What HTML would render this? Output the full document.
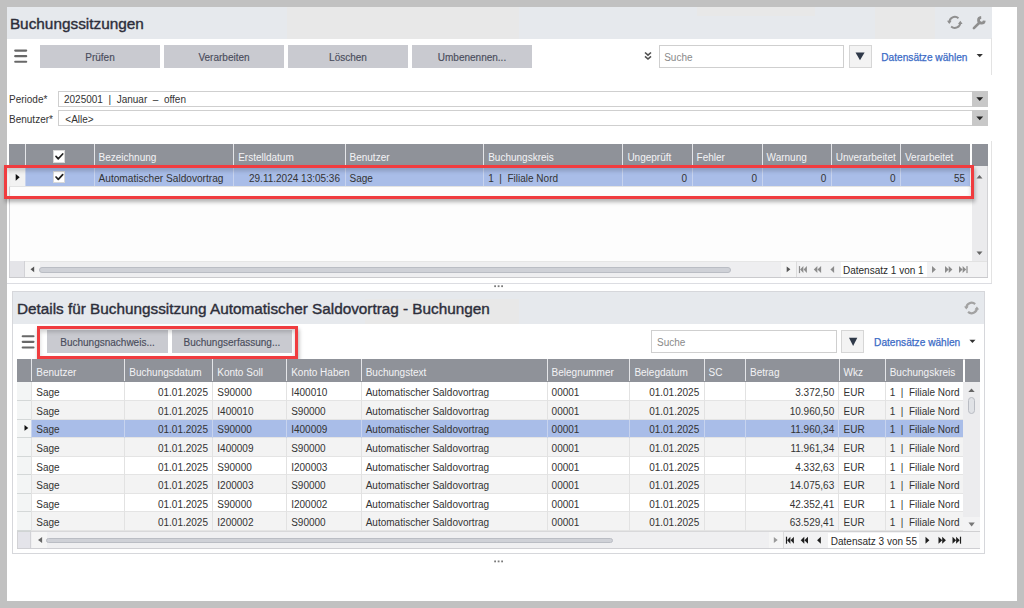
<!DOCTYPE html><html><head><meta charset="utf-8"><style>
*{box-sizing:border-box;margin:0;padding:0}
html,body{width:1024px;height:608px;overflow:hidden;background:#c1c1c1;font-family:"Liberation Sans",sans-serif;font-size:10px;color:#333}
.a{position:absolute}
.tbar{background:#e6e9ed}
.ttl{font-weight:bold;color:#2c2d3a;white-space:nowrap}
.btn{background:#c9cad0;color:#474858;text-align:center;white-space:nowrap}
.ham{width:13px;height:2px;background:#6e6e6e}
.inp{border:1px solid #cfcfcf;background:#fff}
.ph{color:#8a8a8a;white-space:nowrap}
.link{color:#3f6ec9;white-space:nowrap}
.hdr{background:#8f9299}
.t{position:absolute;white-space:nowrap}
.ht{color:#f3f3f5}
.vl{position:absolute;width:1px}
.red{border:3px solid #f03c3f;box-shadow:1px 3px 4px rgba(0,0,0,0.3), inset 0 3px 4px rgba(0,0,0,0.18)}
svg{position:absolute;overflow:visible}
</style></head><body>
<div class="a " style="left:7px;top:7px;width:1010px;height:594px;background:#fff"></div>
<div class="a tbar" style="left:7px;top:7px;width:985px;height:31.5px;"></div>
<div class="a " style="left:286.7px;top:7px;width:232.3px;height:31.5px;background:#e8e8e8"></div>
<div class="a " style="left:697px;top:7px;width:118px;height:9.4px;background:#e8e8e8"></div>
<div class="a " style="left:875.4px;top:7px;width:59.8px;height:31.5px;background:#e8e8e8"></div>
<div class="t" style="top:16.01px;font-size:15.35px;line-height:15.35px;left:9.90px;color:#2c2d3a;-webkit-text-stroke:0.4px #30313c;">Buchungssitzungen</div>
<div class="a " style="left:991px;top:38px;width:1px;height:37px;background:#e3e3e3"></div>
<div class="a " style="left:991px;top:141px;width:1px;height:142px;background:#e3e3e3"></div>
<div class="a btn" style="left:40px;top:45px;width:120px;height:22.5px;"></div>
<div class="t" style="left:40px;width:120px;text-align:center;top:52.53px;font-size:10px;line-height:10px;color:#4a4d5c;-webkit-text-stroke:0.15px #4a4d5c">Prüfen</div>
<div class="a btn" style="left:164px;top:45px;width:120px;height:22.5px;"></div>
<div class="t" style="left:164px;width:120px;text-align:center;top:52.53px;font-size:10px;line-height:10px;color:#4a4d5c;-webkit-text-stroke:0.15px #4a4d5c">Verarbeiten</div>
<div class="a btn" style="left:288px;top:45px;width:120px;height:22.5px;"></div>
<div class="t" style="left:288px;width:120px;text-align:center;top:52.53px;font-size:10px;line-height:10px;color:#4a4d5c;-webkit-text-stroke:0.15px #4a4d5c">Löschen</div>
<div class="a btn" style="left:412px;top:45px;width:120px;height:22.5px;"></div>
<div class="t" style="left:412px;width:120px;text-align:center;top:52.53px;font-size:10px;line-height:10px;color:#4a4d5c;-webkit-text-stroke:0.15px #4a4d5c">Umbenennen...</div>
<div class="a inp" style="left:659px;top:44.6px;width:185px;height:23px;"></div>
<div class="t" style="top:52.83px;font-size:10px;line-height:10px;left:664.20px;color:#8a8a8a;">Suche</div>
<div class="a " style="left:849px;top:44.5px;width:22.5px;height:23px;background:#f3f3f3;border:1px solid #d6d6d6"></div>
<div class="t" style="top:52.71px;font-size:10.15px;line-height:10.15px;left:881.30px;color:#3b6bc6;-webkit-text-stroke:0.25px #3b6bc6;">Datensätze wählen</div>
<div class="t" style="top:95.13px;font-size:10px;line-height:10px;left:9.00px;">Periode*</div>
<div class="a " style="left:58px;top:91px;width:930px;height:15.5px;border:1px solid #cfcfcf;border-right:none;background:#fff"></div>
<div class="t" style="top:95.13px;font-size:10px;line-height:10px;left:64.00px;">2025001&nbsp; | &nbsp;Januar&nbsp; – &nbsp;offen</div>
<div class="a " style="left:972px;top:91px;width:15.5px;height:15.5px;background:#c8c8c8"></div>
<div class="t" style="top:114.83px;font-size:10px;line-height:10px;left:9.00px;">Benutzer*</div>
<div class="a " style="left:58px;top:110px;width:930px;height:15.5px;border:1px solid #cfcfcf;border-right:none;background:#fff"></div>
<div class="t" style="top:114.83px;font-size:10px;line-height:10px;left:65.30px;">&lt;Alle&gt;</div>
<div class="a " style="left:972px;top:110px;width:15.5px;height:15.5px;background:#c8c8c8"></div>
<div class="a " style="left:9px;top:144px;width:978.5px;height:133.7px;border:1px solid #d3d3d6;background:#fdfdfd"></div>
<div class="a hdr" style="left:9px;top:144px;width:963px;height:21.5px;"></div>
<div class="a hdr" style="left:972px;top:144px;width:15.5px;height:21.5px;"></div>
<div class="a " style="left:24.5px;top:144px;width:1px;height:21.5px;background:#e4e5e8"></div>
<div class="a " style="left:93.5px;top:144px;width:1px;height:21.5px;background:#e4e5e8"></div>
<div class="a " style="left:233.2px;top:144px;width:1px;height:21.5px;background:#e4e5e8"></div>
<div class="a " style="left:344.5px;top:144px;width:1px;height:21.5px;background:#e4e5e8"></div>
<div class="a " style="left:483.2px;top:144px;width:1px;height:21.5px;background:#e4e5e8"></div>
<div class="a " style="left:622.4px;top:144px;width:1px;height:21.5px;background:#e4e5e8"></div>
<div class="a " style="left:691.6px;top:144px;width:1px;height:21.5px;background:#e4e5e8"></div>
<div class="a " style="left:761.6px;top:144px;width:1px;height:21.5px;background:#e4e5e8"></div>
<div class="a " style="left:830.7px;top:144px;width:1px;height:21.5px;background:#e4e5e8"></div>
<div class="a " style="left:900px;top:144px;width:1px;height:21.5px;background:#e4e5e8"></div>
<div class="t" style="top:152.73px;font-size:10px;line-height:10px;left:98.50px;color:#f3f3f5;">Bezeichnung</div>
<div class="t" style="top:152.73px;font-size:10px;line-height:10px;left:238.20px;color:#f3f3f5;">Erstelldatum</div>
<div class="t" style="top:152.73px;font-size:10px;line-height:10px;left:349.50px;color:#f3f3f5;">Benutzer</div>
<div class="t" style="top:152.73px;font-size:10px;line-height:10px;left:488.20px;color:#f3f3f5;">Buchungskreis</div>
<div class="t" style="top:152.73px;font-size:10px;line-height:10px;left:627.40px;color:#f3f3f5;">Ungeprüft</div>
<div class="t" style="top:152.73px;font-size:10px;line-height:10px;left:696.60px;color:#f3f3f5;">Fehler</div>
<div class="t" style="top:152.73px;font-size:10px;line-height:10px;left:766.60px;color:#f3f3f5;">Warnung</div>
<div class="t" style="top:152.73px;font-size:10px;line-height:10px;left:835.70px;color:#f3f3f5;">Unverarbeitet</div>
<div class="t" style="top:152.73px;font-size:10px;line-height:10px;left:905.00px;color:#f3f3f5;">Verarbeitet</div>
<div class="a " style="left:969.5px;top:144px;width:2.5px;height:21.5px;background:#fdfdfd"></div>
<div class="a " style="left:53.1px;top:150.4px;width:12.4px;height:12.2px;background:#fff;border:1px solid #d8d8d8"></div>
<div class="a " style="left:24.5px;top:166px;width:945px;height:20px;background:#a9bde8"></div>
<div class="a " style="left:9px;top:166px;width:15.5px;height:20px;background:#f2f2f2"></div>
<div class="a " style="left:24.5px;top:166px;width:1px;height:20px;background:#c7d3ee"></div>
<div class="a " style="left:93.5px;top:166px;width:1px;height:20px;background:#c7d3ee"></div>
<div class="a " style="left:233.2px;top:166px;width:1px;height:20px;background:#c7d3ee"></div>
<div class="a " style="left:344.5px;top:166px;width:1px;height:20px;background:#c7d3ee"></div>
<div class="a " style="left:483.2px;top:166px;width:1px;height:20px;background:#c7d3ee"></div>
<div class="a " style="left:622.4px;top:166px;width:1px;height:20px;background:#c7d3ee"></div>
<div class="a " style="left:691.6px;top:166px;width:1px;height:20px;background:#c7d3ee"></div>
<div class="a " style="left:761.6px;top:166px;width:1px;height:20px;background:#c7d3ee"></div>
<div class="a " style="left:830.7px;top:166px;width:1px;height:20px;background:#c7d3ee"></div>
<div class="a " style="left:900px;top:166px;width:1px;height:20px;background:#c7d3ee"></div>
<div class="a " style="left:9px;top:186px;width:963px;height:1px;background:#e3e3e3"></div>
<svg style="left:0;top:0" width="1024" height="608"><polygon points="15.7,174 19.7,177.35 15.7,180.7" fill="#111"/></svg>
<div class="a " style="left:53.1px;top:171px;width:12.4px;height:12.2px;background:#fff;border:1px solid #d8d8d8"></div>
<div class="t" style="top:173.81px;font-size:10.15px;line-height:10.15px;left:98.50px;">Automatischer Saldovortrag</div>
<div class="t" style="top:173.94px;font-size:10px;line-height:10px;right:684.00px;text-align:right;">29.11.2024 13:05:36</div>
<div class="t" style="top:173.94px;font-size:10px;line-height:10px;left:349.50px;">Sage</div>
<div class="t" style="top:173.94px;font-size:10px;line-height:10px;left:488.20px;">1&nbsp; | &nbsp;Filiale Nord</div>
<div class="t" style="top:173.94px;font-size:10px;line-height:10px;right:336.90px;text-align:right;">0</div>
<div class="t" style="top:173.94px;font-size:10px;line-height:10px;right:266.90px;text-align:right;">0</div>
<div class="t" style="top:173.94px;font-size:10px;line-height:10px;right:197.80px;text-align:right;">0</div>
<div class="t" style="top:173.94px;font-size:10px;line-height:10px;right:128.50px;text-align:right;">0</div>
<div class="t" style="top:173.94px;font-size:10px;line-height:10px;right:59.00px;text-align:right;">55</div>
<div class="a " style="left:972px;top:165.5px;width:15px;height:95.5px;background:#ebebed"></div>
<div class="a " style="left:9.5px;top:261px;width:962px;height:16.5px;background:#eeeef0;border-top:1px solid #e6e6e6"></div>
<div class="a " style="left:9.5px;top:261px;width:15px;height:16.5px;background:#e4e4e8;border-right:1px solid #d2d2d6"></div>
<div class="a " style="left:24.5px;top:261.5px;width:15px;height:16px;background:#f5f5f5"></div>
<div class="a " style="left:39px;top:267px;width:692px;height:5.6px;background:#cfd1d7;border:1px solid #babdc4;border-radius:3px"></div>
<div class="a " style="left:781px;top:261.5px;width:14.5px;height:16px;background:#f5f5f5"></div>
<div class="a " style="left:795.5px;top:261px;width:191.5px;height:16.5px;background:#f2f2f3;border-left:1px solid #dcdcdc;border-top:1px solid #e2e2e2"></div>
<div class="a " style="left:840.7px;top:262px;width:86.1px;height:15.3px;background:#fff"></div>
<div class="t" style="top:266.24px;font-size:10px;line-height:10px;left:843.00px;color:#2a2a2a;">Datensatz 1 von 1</div>
<div class="a red" style="left:4px;top:165px;width:970px;height:34px;"></div>
<div class="a " style="left:7px;top:283px;width:985px;height:1px;background:#dcdde2"></div>
<div class="a " style="left:9px;top:277px;width:979px;height:1px;background:#cacacd"></div>
<div class="a " style="left:12px;top:291px;width:972.5px;height:262.5px;border:1px solid #d6d7db;background:#fff"></div>
<div class="a tbar" style="left:13px;top:292px;width:970.5px;height:32px;"></div>
<div class="a " style="left:365px;top:299.3px;width:153.7px;height:24.5px;background:#e8e8e8"></div>
<div class="t" style="top:301.45px;font-size:15.3px;line-height:15.3px;left:17.00px;color:#2c2d3a;-webkit-text-stroke:0.4px #30313c;">Details für Buchungssitzung Automatischer Saldovortrag - Buchungen</div>
<div class="a btn" style="left:47px;top:330px;width:121px;height:22.7px;"></div>
<div class="t" style="left:47px;width:121px;text-align:center;top:338.14px;font-size:10px;line-height:10px;color:#4a4d5c;-webkit-text-stroke:0.15px #4a4d5c">Buchungsnachweis...</div>
<div class="a btn" style="left:171.6px;top:330px;width:120.6px;height:22.7px;"></div>
<div class="t" style="left:171.6px;width:120.6px;text-align:center;top:338.14px;font-size:10px;line-height:10px;color:#4a4d5c;-webkit-text-stroke:0.15px #4a4d5c">Buchungserfassung...</div>
<div class="a red" style="left:37px;top:326.2px;width:261.2px;height:32.5px;"></div>
<div class="a inp" style="left:651.3px;top:330px;width:185.4px;height:22.5px;"></div>
<div class="t" style="top:338.04px;font-size:10px;line-height:10px;left:657.00px;color:#8a8a8a;">Suche</div>
<div class="a " style="left:841px;top:330px;width:23.3px;height:22.5px;background:#f3f3f3;border:1px solid #d6d6d6"></div>
<div class="t" style="top:337.81px;font-size:10.15px;line-height:10.15px;left:874.10px;color:#3b6bc6;-webkit-text-stroke:0.25px #3b6bc6;">Datensätze wählen</div>
<div class="a " style="left:17.4px;top:359.2px;width:962.9px;height:189.2px;border:1px solid #d3d3d6;background:#fff"></div>
<div class="a hdr" style="left:17.4px;top:359.2px;width:946px;height:22.69999999999999px;"></div>
<div class="a hdr" style="left:965px;top:359.2px;width:14.6px;height:22.69999999999999px;"></div>
<div class="a " style="left:31.3px;top:359.2px;width:1px;height:22.30000000000001px;background:#e4e5e8"></div>
<div class="a " style="left:124.3px;top:359.2px;width:1px;height:22.30000000000001px;background:#e4e5e8"></div>
<div class="a " style="left:212.3px;top:359.2px;width:1px;height:22.30000000000001px;background:#e4e5e8"></div>
<div class="a " style="left:286.2px;top:359.2px;width:1px;height:22.30000000000001px;background:#e4e5e8"></div>
<div class="a " style="left:360.7px;top:359.2px;width:1px;height:22.30000000000001px;background:#e4e5e8"></div>
<div class="a " style="left:546.6px;top:359.2px;width:1px;height:22.30000000000001px;background:#e4e5e8"></div>
<div class="a " style="left:629.4px;top:359.2px;width:1px;height:22.30000000000001px;background:#e4e5e8"></div>
<div class="a " style="left:703.5px;top:359.2px;width:1px;height:22.30000000000001px;background:#e4e5e8"></div>
<div class="a " style="left:745px;top:359.2px;width:1px;height:22.30000000000001px;background:#e4e5e8"></div>
<div class="a " style="left:838.5px;top:359.2px;width:1px;height:22.30000000000001px;background:#e4e5e8"></div>
<div class="a " style="left:884.7px;top:359.2px;width:1px;height:22.30000000000001px;background:#e4e5e8"></div>
<div class="t" style="top:367.84px;font-size:10px;line-height:10px;left:36.30px;color:#f3f3f5;">Benutzer</div>
<div class="t" style="top:367.84px;font-size:10px;line-height:10px;left:129.30px;color:#f3f3f5;">Buchungsdatum</div>
<div class="t" style="top:367.84px;font-size:10px;line-height:10px;left:217.30px;color:#f3f3f5;">Konto Soll</div>
<div class="t" style="top:367.84px;font-size:10px;line-height:10px;left:291.20px;color:#f3f3f5;">Konto Haben</div>
<div class="t" style="top:367.84px;font-size:10px;line-height:10px;left:365.70px;color:#f3f3f5;">Buchungstext</div>
<div class="t" style="top:367.84px;font-size:10px;line-height:10px;left:551.60px;color:#f3f3f5;">Belegnummer</div>
<div class="t" style="top:367.84px;font-size:10px;line-height:10px;left:634.40px;color:#f3f3f5;">Belegdatum</div>
<div class="t" style="top:367.84px;font-size:10px;line-height:10px;left:708.50px;color:#f3f3f5;">SC</div>
<div class="t" style="top:367.84px;font-size:10px;line-height:10px;left:750.00px;color:#f3f3f5;">Betrag</div>
<div class="t" style="top:367.84px;font-size:10px;line-height:10px;left:843.50px;color:#f3f3f5;">Wkz</div>
<div class="t" style="top:367.84px;font-size:10px;line-height:10px;left:889.70px;color:#f3f3f5;">Buchungskreis</div>
<div class="a " style="left:31px;top:382px;width:932.2px;height:18px;background:#ffffff"></div>
<div class="a " style="left:17.4px;top:382px;width:14px;height:18px;background:#f3f5f5"></div>
<div class="a " style="left:17.4px;top:400px;width:945.8000000000001px;height:1px;background:#e4e4e4"></div>
<div class="a " style="left:17.4px;top:400px;width:14px;height:1px;background:#d4d8d8"></div>
<div class="a " style="left:31px;top:382px;width:1px;height:19px;background:#e2e2e2"></div>
<div class="a " style="left:124px;top:382px;width:1px;height:19px;background:#e2e2e2"></div>
<div class="a " style="left:212px;top:382px;width:1px;height:19px;background:#e2e2e2"></div>
<div class="a " style="left:286px;top:382px;width:1px;height:19px;background:#e2e2e2"></div>
<div class="a " style="left:361px;top:382px;width:1px;height:19px;background:#e2e2e2"></div>
<div class="a " style="left:547px;top:382px;width:1px;height:19px;background:#e2e2e2"></div>
<div class="a " style="left:629px;top:382px;width:1px;height:19px;background:#e2e2e2"></div>
<div class="a " style="left:704px;top:382px;width:1px;height:19px;background:#e2e2e2"></div>
<div class="a " style="left:745px;top:382px;width:1px;height:19px;background:#e2e2e2"></div>
<div class="a " style="left:838px;top:382px;width:1px;height:19px;background:#e2e2e2"></div>
<div class="a " style="left:885px;top:382px;width:1px;height:19px;background:#e2e2e2"></div>
<div class="t" style="top:388.34px;font-size:10px;line-height:10px;left:36.30px;">Sage</div>
<div class="t" style="top:388.34px;font-size:10px;line-height:10px;right:816.00px;text-align:right;">01.01.2025</div>
<div class="t" style="top:388.34px;font-size:10px;line-height:10px;left:217.30px;">S90000</div>
<div class="t" style="top:388.34px;font-size:10px;line-height:10px;left:291.20px;">I400010</div>
<div class="t" style="top:388.34px;font-size:10px;line-height:10px;left:365.70px;">Automatischer Saldovortrag</div>
<div class="t" style="top:388.34px;font-size:10px;line-height:10px;left:551.60px;">00001</div>
<div class="t" style="top:388.34px;font-size:10px;line-height:10px;right:324.80px;text-align:right;">01.01.2025</div>
<div class="t" style="top:388.34px;font-size:10px;line-height:10px;right:189.80px;text-align:right;">3.372,50</div>
<div class="t" style="top:388.34px;font-size:10px;line-height:10px;left:843.50px;">EUR</div>
<div class="t" style="top:388.34px;font-size:10px;line-height:10px;left:889.70px;">1&nbsp; | &nbsp;Filiale Nord</div>
<div class="a " style="left:31px;top:401px;width:932.2px;height:18px;background:#f3f3f3"></div>
<div class="a " style="left:17.4px;top:401px;width:14px;height:18px;background:#f3f5f5"></div>
<div class="a " style="left:17.4px;top:419px;width:945.8000000000001px;height:1px;background:#e4e4e4"></div>
<div class="a " style="left:17.4px;top:419px;width:14px;height:1px;background:#d4d8d8"></div>
<div class="a " style="left:31px;top:401px;width:1px;height:19px;background:#e2e2e2"></div>
<div class="a " style="left:124px;top:401px;width:1px;height:19px;background:#e2e2e2"></div>
<div class="a " style="left:212px;top:401px;width:1px;height:19px;background:#e2e2e2"></div>
<div class="a " style="left:286px;top:401px;width:1px;height:19px;background:#e2e2e2"></div>
<div class="a " style="left:361px;top:401px;width:1px;height:19px;background:#e2e2e2"></div>
<div class="a " style="left:547px;top:401px;width:1px;height:19px;background:#e2e2e2"></div>
<div class="a " style="left:629px;top:401px;width:1px;height:19px;background:#e2e2e2"></div>
<div class="a " style="left:704px;top:401px;width:1px;height:19px;background:#e2e2e2"></div>
<div class="a " style="left:745px;top:401px;width:1px;height:19px;background:#e2e2e2"></div>
<div class="a " style="left:838px;top:401px;width:1px;height:19px;background:#e2e2e2"></div>
<div class="a " style="left:885px;top:401px;width:1px;height:19px;background:#e2e2e2"></div>
<div class="t" style="top:406.89px;font-size:10px;line-height:10px;left:36.30px;">Sage</div>
<div class="t" style="top:406.89px;font-size:10px;line-height:10px;right:816.00px;text-align:right;">01.01.2025</div>
<div class="t" style="top:406.89px;font-size:10px;line-height:10px;left:217.30px;">I400010</div>
<div class="t" style="top:406.89px;font-size:10px;line-height:10px;left:291.20px;">S90000</div>
<div class="t" style="top:406.89px;font-size:10px;line-height:10px;left:365.70px;">Automatischer Saldovortrag</div>
<div class="t" style="top:406.89px;font-size:10px;line-height:10px;left:551.60px;">00001</div>
<div class="t" style="top:406.89px;font-size:10px;line-height:10px;right:324.80px;text-align:right;">01.01.2025</div>
<div class="t" style="top:406.89px;font-size:10px;line-height:10px;right:189.80px;text-align:right;">10.960,50</div>
<div class="t" style="top:406.89px;font-size:10px;line-height:10px;left:843.50px;">EUR</div>
<div class="t" style="top:406.89px;font-size:10px;line-height:10px;left:889.70px;">1&nbsp; | &nbsp;Filiale Nord</div>
<div class="a " style="left:31px;top:420px;width:932.2px;height:17px;background:#a9bde8"></div>
<div class="a " style="left:17.4px;top:420px;width:14px;height:17px;background:#f3f5f5"></div>
<div class="a " style="left:17.4px;top:437px;width:945.8000000000001px;height:1px;background:#e4e4e4"></div>
<div class="a " style="left:17.4px;top:437px;width:14px;height:1px;background:#d4d8d8"></div>
<div class="a " style="left:31px;top:420px;width:1px;height:18px;background:#c7d3ee"></div>
<div class="a " style="left:124px;top:420px;width:1px;height:18px;background:#c7d3ee"></div>
<div class="a " style="left:212px;top:420px;width:1px;height:18px;background:#c7d3ee"></div>
<div class="a " style="left:286px;top:420px;width:1px;height:18px;background:#c7d3ee"></div>
<div class="a " style="left:361px;top:420px;width:1px;height:18px;background:#c7d3ee"></div>
<div class="a " style="left:547px;top:420px;width:1px;height:18px;background:#c7d3ee"></div>
<div class="a " style="left:629px;top:420px;width:1px;height:18px;background:#c7d3ee"></div>
<div class="a " style="left:704px;top:420px;width:1px;height:18px;background:#c7d3ee"></div>
<div class="a " style="left:745px;top:420px;width:1px;height:18px;background:#c7d3ee"></div>
<div class="a " style="left:838px;top:420px;width:1px;height:18px;background:#c7d3ee"></div>
<div class="a " style="left:885px;top:420px;width:1px;height:18px;background:#c7d3ee"></div>
<div class="t" style="top:425.44px;font-size:10px;line-height:10px;left:36.30px;">Sage</div>
<div class="t" style="top:425.44px;font-size:10px;line-height:10px;right:816.00px;text-align:right;">01.01.2025</div>
<div class="t" style="top:425.44px;font-size:10px;line-height:10px;left:217.30px;">S90000</div>
<div class="t" style="top:425.44px;font-size:10px;line-height:10px;left:291.20px;">I400009</div>
<div class="t" style="top:425.44px;font-size:10px;line-height:10px;left:365.70px;">Automatischer Saldovortrag</div>
<div class="t" style="top:425.44px;font-size:10px;line-height:10px;left:551.60px;">00001</div>
<div class="t" style="top:425.44px;font-size:10px;line-height:10px;right:324.80px;text-align:right;">01.01.2025</div>
<div class="t" style="top:425.44px;font-size:10px;line-height:10px;right:189.80px;text-align:right;">11.960,34</div>
<div class="t" style="top:425.44px;font-size:10px;line-height:10px;left:843.50px;">EUR</div>
<div class="t" style="top:425.44px;font-size:10px;line-height:10px;left:889.70px;">1&nbsp; | &nbsp;Filiale Nord</div>
<div class="a " style="left:31px;top:438px;width:932.2px;height:18px;background:#f3f3f3"></div>
<div class="a " style="left:17.4px;top:438px;width:14px;height:18px;background:#f3f5f5"></div>
<div class="a " style="left:17.4px;top:456px;width:945.8000000000001px;height:1px;background:#e4e4e4"></div>
<div class="a " style="left:17.4px;top:456px;width:14px;height:1px;background:#d4d8d8"></div>
<div class="a " style="left:31px;top:438px;width:1px;height:19px;background:#e2e2e2"></div>
<div class="a " style="left:124px;top:438px;width:1px;height:19px;background:#e2e2e2"></div>
<div class="a " style="left:212px;top:438px;width:1px;height:19px;background:#e2e2e2"></div>
<div class="a " style="left:286px;top:438px;width:1px;height:19px;background:#e2e2e2"></div>
<div class="a " style="left:361px;top:438px;width:1px;height:19px;background:#e2e2e2"></div>
<div class="a " style="left:547px;top:438px;width:1px;height:19px;background:#e2e2e2"></div>
<div class="a " style="left:629px;top:438px;width:1px;height:19px;background:#e2e2e2"></div>
<div class="a " style="left:704px;top:438px;width:1px;height:19px;background:#e2e2e2"></div>
<div class="a " style="left:745px;top:438px;width:1px;height:19px;background:#e2e2e2"></div>
<div class="a " style="left:838px;top:438px;width:1px;height:19px;background:#e2e2e2"></div>
<div class="a " style="left:885px;top:438px;width:1px;height:19px;background:#e2e2e2"></div>
<div class="t" style="top:443.99px;font-size:10px;line-height:10px;left:36.30px;">Sage</div>
<div class="t" style="top:443.99px;font-size:10px;line-height:10px;right:816.00px;text-align:right;">01.01.2025</div>
<div class="t" style="top:443.99px;font-size:10px;line-height:10px;left:217.30px;">I400009</div>
<div class="t" style="top:443.99px;font-size:10px;line-height:10px;left:291.20px;">S90000</div>
<div class="t" style="top:443.99px;font-size:10px;line-height:10px;left:365.70px;">Automatischer Saldovortrag</div>
<div class="t" style="top:443.99px;font-size:10px;line-height:10px;left:551.60px;">00001</div>
<div class="t" style="top:443.99px;font-size:10px;line-height:10px;right:324.80px;text-align:right;">01.01.2025</div>
<div class="t" style="top:443.99px;font-size:10px;line-height:10px;right:189.80px;text-align:right;">11.961,34</div>
<div class="t" style="top:443.99px;font-size:10px;line-height:10px;left:843.50px;">EUR</div>
<div class="t" style="top:443.99px;font-size:10px;line-height:10px;left:889.70px;">1&nbsp; | &nbsp;Filiale Nord</div>
<div class="a " style="left:31px;top:457px;width:932.2px;height:17px;background:#ffffff"></div>
<div class="a " style="left:17.4px;top:457px;width:14px;height:17px;background:#f3f5f5"></div>
<div class="a " style="left:17.4px;top:474px;width:945.8000000000001px;height:1px;background:#e4e4e4"></div>
<div class="a " style="left:17.4px;top:474px;width:14px;height:1px;background:#d4d8d8"></div>
<div class="a " style="left:31px;top:457px;width:1px;height:18px;background:#e2e2e2"></div>
<div class="a " style="left:124px;top:457px;width:1px;height:18px;background:#e2e2e2"></div>
<div class="a " style="left:212px;top:457px;width:1px;height:18px;background:#e2e2e2"></div>
<div class="a " style="left:286px;top:457px;width:1px;height:18px;background:#e2e2e2"></div>
<div class="a " style="left:361px;top:457px;width:1px;height:18px;background:#e2e2e2"></div>
<div class="a " style="left:547px;top:457px;width:1px;height:18px;background:#e2e2e2"></div>
<div class="a " style="left:629px;top:457px;width:1px;height:18px;background:#e2e2e2"></div>
<div class="a " style="left:704px;top:457px;width:1px;height:18px;background:#e2e2e2"></div>
<div class="a " style="left:745px;top:457px;width:1px;height:18px;background:#e2e2e2"></div>
<div class="a " style="left:838px;top:457px;width:1px;height:18px;background:#e2e2e2"></div>
<div class="a " style="left:885px;top:457px;width:1px;height:18px;background:#e2e2e2"></div>
<div class="t" style="top:462.54px;font-size:10px;line-height:10px;left:36.30px;">Sage</div>
<div class="t" style="top:462.54px;font-size:10px;line-height:10px;right:816.00px;text-align:right;">01.01.2025</div>
<div class="t" style="top:462.54px;font-size:10px;line-height:10px;left:217.30px;">S90000</div>
<div class="t" style="top:462.54px;font-size:10px;line-height:10px;left:291.20px;">I200003</div>
<div class="t" style="top:462.54px;font-size:10px;line-height:10px;left:365.70px;">Automatischer Saldovortrag</div>
<div class="t" style="top:462.54px;font-size:10px;line-height:10px;left:551.60px;">00001</div>
<div class="t" style="top:462.54px;font-size:10px;line-height:10px;right:324.80px;text-align:right;">01.01.2025</div>
<div class="t" style="top:462.54px;font-size:10px;line-height:10px;right:189.80px;text-align:right;">4.332,63</div>
<div class="t" style="top:462.54px;font-size:10px;line-height:10px;left:843.50px;">EUR</div>
<div class="t" style="top:462.54px;font-size:10px;line-height:10px;left:889.70px;">1&nbsp; | &nbsp;Filiale Nord</div>
<div class="a " style="left:31px;top:475px;width:932.2px;height:18px;background:#f3f3f3"></div>
<div class="a " style="left:17.4px;top:475px;width:14px;height:18px;background:#f3f5f5"></div>
<div class="a " style="left:17.4px;top:493px;width:945.8000000000001px;height:1px;background:#e4e4e4"></div>
<div class="a " style="left:17.4px;top:493px;width:14px;height:1px;background:#d4d8d8"></div>
<div class="a " style="left:31px;top:475px;width:1px;height:19px;background:#e2e2e2"></div>
<div class="a " style="left:124px;top:475px;width:1px;height:19px;background:#e2e2e2"></div>
<div class="a " style="left:212px;top:475px;width:1px;height:19px;background:#e2e2e2"></div>
<div class="a " style="left:286px;top:475px;width:1px;height:19px;background:#e2e2e2"></div>
<div class="a " style="left:361px;top:475px;width:1px;height:19px;background:#e2e2e2"></div>
<div class="a " style="left:547px;top:475px;width:1px;height:19px;background:#e2e2e2"></div>
<div class="a " style="left:629px;top:475px;width:1px;height:19px;background:#e2e2e2"></div>
<div class="a " style="left:704px;top:475px;width:1px;height:19px;background:#e2e2e2"></div>
<div class="a " style="left:745px;top:475px;width:1px;height:19px;background:#e2e2e2"></div>
<div class="a " style="left:838px;top:475px;width:1px;height:19px;background:#e2e2e2"></div>
<div class="a " style="left:885px;top:475px;width:1px;height:19px;background:#e2e2e2"></div>
<div class="t" style="top:481.09px;font-size:10px;line-height:10px;left:36.30px;">Sage</div>
<div class="t" style="top:481.09px;font-size:10px;line-height:10px;right:816.00px;text-align:right;">01.01.2025</div>
<div class="t" style="top:481.09px;font-size:10px;line-height:10px;left:217.30px;">I200003</div>
<div class="t" style="top:481.09px;font-size:10px;line-height:10px;left:291.20px;">S90000</div>
<div class="t" style="top:481.09px;font-size:10px;line-height:10px;left:365.70px;">Automatischer Saldovortrag</div>
<div class="t" style="top:481.09px;font-size:10px;line-height:10px;left:551.60px;">00001</div>
<div class="t" style="top:481.09px;font-size:10px;line-height:10px;right:324.80px;text-align:right;">01.01.2025</div>
<div class="t" style="top:481.09px;font-size:10px;line-height:10px;right:189.80px;text-align:right;">14.075,63</div>
<div class="t" style="top:481.09px;font-size:10px;line-height:10px;left:843.50px;">EUR</div>
<div class="t" style="top:481.09px;font-size:10px;line-height:10px;left:889.70px;">1&nbsp; | &nbsp;Filiale Nord</div>
<div class="a " style="left:31px;top:494px;width:932.2px;height:17px;background:#ffffff"></div>
<div class="a " style="left:17.4px;top:494px;width:14px;height:17px;background:#f3f5f5"></div>
<div class="a " style="left:17.4px;top:511px;width:945.8000000000001px;height:1px;background:#e4e4e4"></div>
<div class="a " style="left:17.4px;top:511px;width:14px;height:1px;background:#d4d8d8"></div>
<div class="a " style="left:31px;top:494px;width:1px;height:18px;background:#e2e2e2"></div>
<div class="a " style="left:124px;top:494px;width:1px;height:18px;background:#e2e2e2"></div>
<div class="a " style="left:212px;top:494px;width:1px;height:18px;background:#e2e2e2"></div>
<div class="a " style="left:286px;top:494px;width:1px;height:18px;background:#e2e2e2"></div>
<div class="a " style="left:361px;top:494px;width:1px;height:18px;background:#e2e2e2"></div>
<div class="a " style="left:547px;top:494px;width:1px;height:18px;background:#e2e2e2"></div>
<div class="a " style="left:629px;top:494px;width:1px;height:18px;background:#e2e2e2"></div>
<div class="a " style="left:704px;top:494px;width:1px;height:18px;background:#e2e2e2"></div>
<div class="a " style="left:745px;top:494px;width:1px;height:18px;background:#e2e2e2"></div>
<div class="a " style="left:838px;top:494px;width:1px;height:18px;background:#e2e2e2"></div>
<div class="a " style="left:885px;top:494px;width:1px;height:18px;background:#e2e2e2"></div>
<div class="t" style="top:499.64px;font-size:10px;line-height:10px;left:36.30px;">Sage</div>
<div class="t" style="top:499.64px;font-size:10px;line-height:10px;right:816.00px;text-align:right;">01.01.2025</div>
<div class="t" style="top:499.64px;font-size:10px;line-height:10px;left:217.30px;">S90000</div>
<div class="t" style="top:499.64px;font-size:10px;line-height:10px;left:291.20px;">I200002</div>
<div class="t" style="top:499.64px;font-size:10px;line-height:10px;left:365.70px;">Automatischer Saldovortrag</div>
<div class="t" style="top:499.64px;font-size:10px;line-height:10px;left:551.60px;">00001</div>
<div class="t" style="top:499.64px;font-size:10px;line-height:10px;right:324.80px;text-align:right;">01.01.2025</div>
<div class="t" style="top:499.64px;font-size:10px;line-height:10px;right:189.80px;text-align:right;">42.352,41</div>
<div class="t" style="top:499.64px;font-size:10px;line-height:10px;left:843.50px;">EUR</div>
<div class="t" style="top:499.64px;font-size:10px;line-height:10px;left:889.70px;">1&nbsp; | &nbsp;Filiale Nord</div>
<div class="a " style="left:31px;top:512px;width:932.2px;height:18px;background:#f3f3f3"></div>
<div class="a " style="left:17.4px;top:512px;width:14px;height:18px;background:#f3f5f5"></div>
<div class="a " style="left:17.4px;top:530px;width:945.8000000000001px;height:1px;background:#e4e4e4"></div>
<div class="a " style="left:17.4px;top:530px;width:14px;height:1px;background:#d4d8d8"></div>
<div class="a " style="left:31px;top:512px;width:1px;height:19px;background:#e2e2e2"></div>
<div class="a " style="left:124px;top:512px;width:1px;height:19px;background:#e2e2e2"></div>
<div class="a " style="left:212px;top:512px;width:1px;height:19px;background:#e2e2e2"></div>
<div class="a " style="left:286px;top:512px;width:1px;height:19px;background:#e2e2e2"></div>
<div class="a " style="left:361px;top:512px;width:1px;height:19px;background:#e2e2e2"></div>
<div class="a " style="left:547px;top:512px;width:1px;height:19px;background:#e2e2e2"></div>
<div class="a " style="left:629px;top:512px;width:1px;height:19px;background:#e2e2e2"></div>
<div class="a " style="left:704px;top:512px;width:1px;height:19px;background:#e2e2e2"></div>
<div class="a " style="left:745px;top:512px;width:1px;height:19px;background:#e2e2e2"></div>
<div class="a " style="left:838px;top:512px;width:1px;height:19px;background:#e2e2e2"></div>
<div class="a " style="left:885px;top:512px;width:1px;height:19px;background:#e2e2e2"></div>
<div class="t" style="top:518.18px;font-size:10px;line-height:10px;left:36.30px;">Sage</div>
<div class="t" style="top:518.18px;font-size:10px;line-height:10px;right:816.00px;text-align:right;">01.01.2025</div>
<div class="t" style="top:518.18px;font-size:10px;line-height:10px;left:217.30px;">I200002</div>
<div class="t" style="top:518.18px;font-size:10px;line-height:10px;left:291.20px;">S90000</div>
<div class="t" style="top:518.18px;font-size:10px;line-height:10px;left:365.70px;">Automatischer Saldovortrag</div>
<div class="t" style="top:518.18px;font-size:10px;line-height:10px;left:551.60px;">00001</div>
<div class="t" style="top:518.18px;font-size:10px;line-height:10px;right:324.80px;text-align:right;">01.01.2025</div>
<div class="t" style="top:518.18px;font-size:10px;line-height:10px;right:189.80px;text-align:right;">63.529,41</div>
<div class="t" style="top:518.18px;font-size:10px;line-height:10px;left:843.50px;">EUR</div>
<div class="t" style="top:518.18px;font-size:10px;line-height:10px;left:889.70px;">1&nbsp; | &nbsp;Filiale Nord</div>
<svg style="left:0;top:0" width="1024" height="608"><polygon points="24.5,425.1 28.3,427.90000000000003 24.5,430.70000000000005" fill="#111"/></svg>
<div class="a " style="left:963.2px;top:381.5px;width:16.6px;height:149.79999999999995px;background:#ececee"></div>
<div class="a " style="left:968px;top:396.6px;width:7.2px;height:17.4px;background:#e0e2e6;border:1px solid #b9bcc3;border-radius:4px"></div>
<div class="a " style="left:963.2px;top:517px;width:16.5px;height:14.3px;background:#f3f3f4"></div>
<div class="a " style="left:17.9px;top:531.3px;width:962px;height:17px;background:#efeff1;border-top:1px solid #d8d8da"></div>
<div class="a " style="left:17.9px;top:531.3px;width:13.6px;height:17px;background:#e4e4ea;border-right:1px solid #d2d2d6;border-top:1px solid #d0d4d4"></div>
<div class="a " style="left:31.5px;top:532.3px;width:15px;height:16px;background:#f5f5f5"></div>
<div class="a " style="left:46px;top:537.8px;width:567px;height:5.2px;background:#cfd1d7;border:1px solid #babdc4;border-radius:3px"></div>
<div class="a " style="left:769px;top:532.3px;width:14px;height:16px;background:#f5f5f5"></div>
<div class="a " style="left:783px;top:531.3px;width:196.8px;height:17px;background:#f2f2f3;border-left:1px solid #dcdcdc;border-top:1px solid #d0d0d2"></div>
<div class="a " style="left:827.7px;top:533.0px;width:91.3px;height:14.6px;background:#fff"></div>
<div class="t" style="top:537.13px;font-size:10px;line-height:10px;left:830.80px;color:#2a2a2a;">Datensatz 3 von 55</div>
<div class="a " style="left:17.4px;top:547.8px;width:963px;height:1px;background:#cfcfd3"></div>
<svg style="left:0;top:0" width="1024" height="608"><g fill="none" stroke="#8f8f8f" stroke-width="1.9"><path d="M949.30,22.40 A5.5,5.5 0 0 1 958.48,18.31"/><path d="M960.30,22.40 A5.5,5.5 0 0 1 951.12,26.49"/></g><polygon points="947.00,20.80 951.60,20.80 949.30,24.00" fill="#8f8f8f"/><polygon points="958.00,24.00 962.60,24.00 960.30,20.80" fill="#8f8f8f"/><g fill="none" stroke="#8f8f8f"><path d="M973.9,28.2 L979.6,22.5" stroke-width="2.6" stroke-linecap="round"/><path d="M981.2,17.4 A2.9,2.9 0 1 0 984.3,20.6" stroke-width="2.8"/></g><line x1="15.2" y1="50.6" x2="26.2" y2="50.6" stroke="#686868" stroke-width="2.1" stroke-linecap="round"/><line x1="15.2" y1="56.15" x2="26.2" y2="56.15" stroke="#686868" stroke-width="2.1" stroke-linecap="round"/><line x1="15.2" y1="61.7" x2="26.2" y2="61.7" stroke="#686868" stroke-width="2.1" stroke-linecap="round"/><g fill="none" stroke="#505050" stroke-width="1.6"><path d="M645,52.5 L648,55.2 L651,52.5"/><path d="M645,56.3 L648,59 L651,56.3"/></g><polygon points="855.5,52.5 864.6,52.5 860,60.3" fill="#2f3949"/><polygon points="976.6,54 982.9,54 979.75,57.3" fill="#333"/><polygon points="976.3,97.2 983.2,97.2 979.75,101.1" fill="#222"/><polygon points="976.3,116.4 983.2,116.4 979.75,120.3" fill="#222"/><path d="M56.0,156.4 L58.300000000000004,158.8 L62.7,154.0" fill="none" stroke="#1e1e1e" stroke-width="1.7" stroke-linejoin="round" stroke-linecap="round"/><path d="M56.0,177.0 L58.300000000000004,179.4 L62.7,174.6" fill="none" stroke="#1e1e1e" stroke-width="1.7" stroke-linejoin="round" stroke-linecap="round"/><polygon points="976.5,178.5 982.5,178.5 979.5,175" fill="#666"/><polygon points="976.5,251.5 982.5,251.5 979.5,255" fill="#666"/><polygon points="34.2,266.5 34.2,272.2 30.5,269.35" fill="#555"/><polygon points="786.7,266.5 786.7,272.2 790.4,269.35" fill="#555"/><g fill="#8c8c8c"><rect x="798.9" y="266.1" width="1.2" height="7"/><polygon points="803.4,266.1 803.4,273.1 800.1,269.6"/><polygon points="806.9,266.1 806.9,273.1 803.6,269.6"/><polygon points="817.4,266.1 817.4,273.1 813.8,269.6"/><polygon points="821.0999999999999,266.1 821.0999999999999,273.1 817.5,269.6"/><polygon points="834.1,266.1 834.1,273.1 830.4,269.6"/><polygon points="932,266.1 932,273.1 935.9,269.6"/><polygon points="945,266.1 945,273.1 948.7,269.6"/><polygon points="948.7,266.1 948.7,273.1 952.4,269.6"/><polygon points="959,266.1 959,273.1 962.6,269.6"/><polygon points="962.6,266.1 962.6,273.1 966.2,269.6"/><rect x="966.4" y="266.1" width="1.2" height="7"/></g><g fill="#7a7a7a"><rect x="494.2" y="285.3" width="1.8" height="1.8"/><rect x="497.7" y="285.3" width="1.8" height="1.8"/><rect x="501.2" y="285.3" width="1.8" height="1.8"/></g><g fill="none" stroke="#a2a2a2" stroke-width="2.2"><path d="M966.30,308.00 A5.3,5.3 0 0 1 975.15,304.06"/><path d="M976.90,308.00 A5.3,5.3 0 0 1 968.05,311.94"/></g><polygon points="964.00,306.40 968.60,306.40 966.30,309.60" fill="#a2a2a2"/><polygon points="974.60,309.60 979.20,309.60 976.90,306.40" fill="#a2a2a2"/><line x1="22.7" y1="336.2" x2="33.5" y2="336.2" stroke="#686868" stroke-width="2.1" stroke-linecap="round"/><line x1="22.7" y1="341.85" x2="33.5" y2="341.85" stroke="#686868" stroke-width="2.1" stroke-linecap="round"/><line x1="22.7" y1="347.5" x2="33.5" y2="347.5" stroke="#686868" stroke-width="2.1" stroke-linecap="round"/><polygon points="849,337.8 857.3,337.8 853.15,345.9" fill="#2f3949"/><polygon points="969.4,339.7 975.5,339.7 972.45,343" fill="#333"/><polygon points="968.3,392 974.7,392 971.5,388.4" fill="#666"/><polygon points="968.5,522.6 974.8,522.6 971.65,526.4" fill="#777"/><polygon points="42.1,537.0999999999999 42.1,543.0 38,540.05" fill="#666"/><polygon points="773.8,537.0999999999999 773.8,543.0 777.7,540.05" fill="#999"/><g fill="#1e1e1e"><rect x="785.9" y="536.6999999999999" width="1.2" height="7"/><polygon points="790.4,536.6999999999999 790.4,543.6999999999999 787.1,540.1999999999999"/><polygon points="793.9,536.6999999999999 793.9,543.6999999999999 790.6,540.1999999999999"/><polygon points="804.3000000000001,536.6999999999999 804.3000000000001,543.6999999999999 800.7,540.1999999999999"/><polygon points="808.0,536.6999999999999 808.0,543.6999999999999 804.4000000000001,540.1999999999999"/><polygon points="820.8000000000001,536.6999999999999 820.8000000000001,543.6999999999999 817.1,540.1999999999999"/><polygon points="925.5,536.6999999999999 925.5,543.6999999999999 929.4,540.1999999999999"/><polygon points="938.5,536.6999999999999 938.5,543.6999999999999 942.2,540.1999999999999"/><polygon points="942.2,536.6999999999999 942.2,543.6999999999999 945.9,540.1999999999999"/><polygon points="952.5,536.6999999999999 952.5,543.6999999999999 956.1,540.1999999999999"/><polygon points="956.1,536.6999999999999 956.1,543.6999999999999 959.7,540.1999999999999"/><rect x="959.9" y="536.6999999999999" width="1.2" height="7"/></g><g fill="#7a7a7a"><rect x="494.2" y="560.5" width="1.8" height="1.8"/><rect x="497.7" y="560.5" width="1.8" height="1.8"/><rect x="501.2" y="560.5" width="1.8" height="1.8"/></g></svg>
</body></html>
